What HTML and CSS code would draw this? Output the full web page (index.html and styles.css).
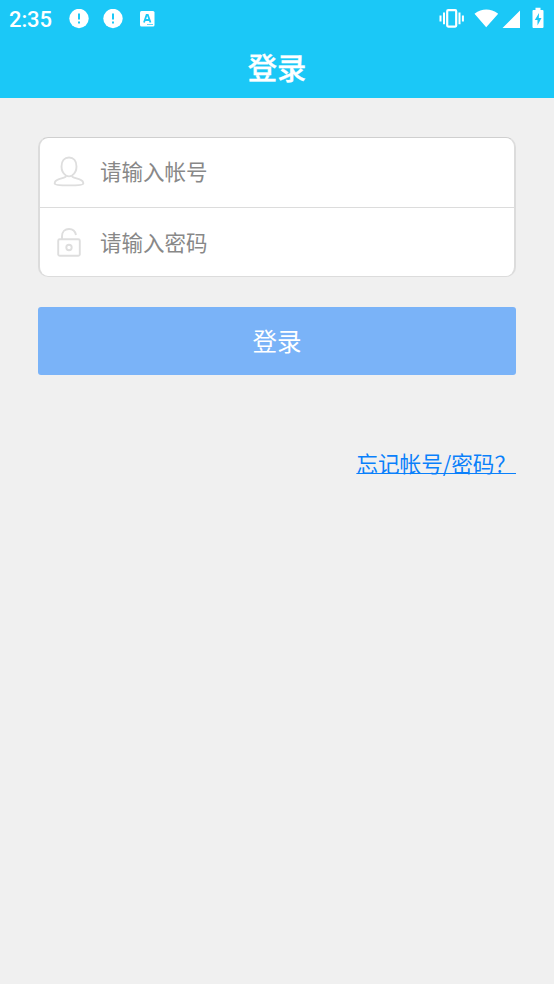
FILE: index.html
```
<!DOCTYPE html>
<html lang="zh-CN">
<head>
<meta charset="utf-8">
<title>登录</title>
<link rel="stylesheet" href="styles.css">
</head>
<body>
<header class="header">
  <div class="status">
    <span class="time">2:35</span>
    <svg class="alert" width="20" height="20" viewBox="0 0 20 20"><circle cx="10" cy="9.500" r="9.700" fill="#fff"/><path d="M10 4.500v6M10 12.500v2" stroke="#1bc8f7" stroke-width="2"/></svg>
    <svg class="alert second" width="20" height="20" viewBox="0 0 20 20"><circle cx="10" cy="9.500" r="9.700" fill="#fff"/><path d="M10 4.500v6M10 12.500v2" stroke="#1bc8f7" stroke-width="2"/></svg>
    <svg class="keyboard" width="15" height="16" viewBox="0 0 15 16"><rect width="14.500" height="15.500" rx="1.500" fill="#fff"/><path d="M4 11.500 6.600 4h1.200l2.700 7.500M5 9h4.500" fill="none" stroke="#1bc8f7" stroke-width="1.800"/><path d="M7.300 13.500h6" stroke="#1bc8f7" stroke-width="1" stroke-dasharray="1.400 .6"/></svg>
    <svg class="system" width="108" height="22" viewBox="0 0 108 22">
      <g fill="none" stroke="#fff"><rect x="8.200" y="3.200" width="9" height="16.400" rx="1" stroke-width="2.200"/><path d="M5 5.600v11.600M20.500 5.600v11.600M1.500 8.400v6M23.900 8.400v6" stroke-width="2"/></g>
      <path fill="#fff" d="M35.500 6.700Q47.200-1.500 59.200 6.700L47.200 20.300ZM81 3.500v17.500H63.500ZM94.500 3h2V.8h5V3h2q1 0 1 1v16q0 1-1 1h-9q-1 0-1-1V4q0-1 1-1z"/>
      <path fill="#1bc8f7" d="M100 6 95.800 13h2.700v5.500l4-7.500h-2.700z"/>
    </svg>
  </div>
  <h1 class="title">登录</h1>
</header>
<main class="content">
  <form>
    <div class="fields">
      <label class="field">
        <svg class="icon" width="34" height="34" viewBox="0 0 34 34"><path d="M14 21.500C11 19.500 9.500 16.500 9.500 12.500C9.500 7 12.500 3.500 17 3.500s7.500 3.500 7.500 9c0 4-1.500 7-4.500 9M14 21.500c0 1.200-.7 1.800-2 2.200l-5 1.500c-2.800.9-4.300 2.200-4.300 4.200 0 1.300 5.100 2 14.300 2s14.300-.7 14.300-2c0-2-1.500-3.300-4.300-4.200l-5-1.500c-1.300-.4-2-1-2-2.200M14 21.500Q17 23.300 20 21.500"/></svg>
        <input class="input" type="text" placeholder="请输入帐号">
      </label>
      <label class="field">
        <svg class="icon lock" width="34" height="34" viewBox="0 0 34 34"><rect x="6.200" y="14.300" width="21.600" height="16.500" rx="1.500"/><path d="M10 14v-2.700C10 6.700 13 4 17 4c3.400 0 6.200 2 7 6"/><circle cx="17" cy="22.500" r="2.700"/></svg>
        <input class="input" type="password" placeholder="请输入密码">
      </label>
    </div>
    <button class="submit" type="button">登录</button>
  </form>
  <a class="forgot" href="#">忘记帐号/密码？</a>
</main>
</body>
</html>
```
FILE: styles.css
```
* { box-sizing: border-box; }
body {
  margin: 0;
  min-height: 984px;
  background: #f0f0f0;
  font-family: "Noto Sans CJK SC", sans-serif;
}
.header {
  height: 98px;
  background: #1bc8f7;
  color: #fff;
}
.status {
  display: flex;
  align-items: center;
  height: 37px;
  padding: 0 9px;
}
.time {
  width: 60px;
  padding-top: 3px;
  font: 500 22px/26px Roboto, sans-serif;
  letter-spacing: -.1px;
}
.second { margin-left: 14px; }
.keyboard { margin-left: 17px; }
.system {
  margin-left: auto;
  margin-right: -2px;
  margin-bottom: 1px;
}
.title {
  margin: 0;
  padding-top: 8px;
  font-size: 29.300px;
  line-height: 43px;
  font-weight: 500;
  text-align: center;
  -webkit-text-stroke: .3px #fff;
}
.content {
  display: flex;
  flex-direction: column;
  padding: 39px 38px 0;
}
.fields {
  height: 140px;
  border: 2px solid #dcdcdc;
  border-top: 1px solid #cfcfcf;
  border-bottom-width: 1px;
  border-radius: 10px;
  background: #fff;
  overflow: hidden;
}
.field {
  display: flex;
  align-items: center;
  height: 69px;
  padding: 0 0 3px 12px;
}
.field + .field {
  height: 70px;
  padding-bottom: 2px;
  border-top: 1px solid #dcdcdc;
}
.icon {
  flex: none;
  fill: none;
  stroke: #dedede;
  stroke-width: 1.900;
}
.input {
  flex: 1;
  min-width: 0;
  height: 60px;
  margin-left: 14px;
  padding: 0 0 1px;
  border: 0;
  outline: 0;
  background: none;
  font: 21.500px "Noto Sans CJK SC", sans-serif;
}
.input::placeholder { color: #888; opacity: 1; }
.submit {
  display: block;
  width: 100%;
  height: 68px;
  margin-top: 30px;
  padding: 0 0 2px;
  border: 0;
  border-radius: 3px;
  background: #7ab3f8;
  color: #fff;
  font: 24.500px "Noto Sans CJK SC", sans-serif;
}
.forgot {
  align-self: flex-end;
  margin-top: 72px;
  color: #0a80fb;
  font-size: 21.600px;
  line-height: 32px;
  text-decoration-thickness: 1px;
}
```
